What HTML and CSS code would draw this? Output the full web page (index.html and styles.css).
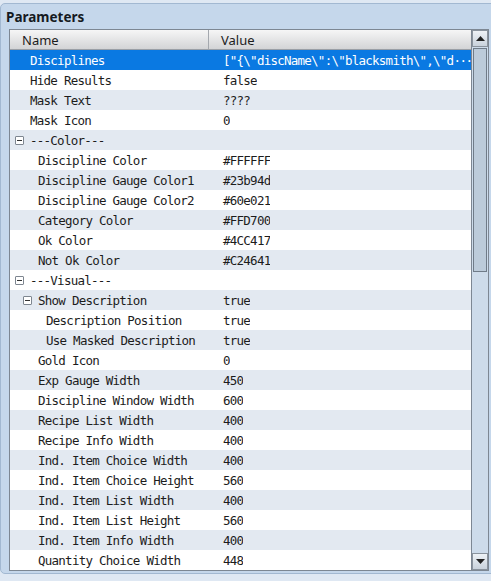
FILE: index.html
```html
<!DOCTYPE html>
<html lang="en">
<head>
  <meta charset="UTF-8">
  <title>Parameters</title>
  <link rel="stylesheet" href="styles.css">
</head>
<body>

  <div class="panel">
    <div class="panel-title">Parameters</div>

    <div class="grid">
      <div class="list">
        <div class="head">
          <div class="col-name">Name</div>
          <div class="col-value">Value</div>
        </div>

        <div class="row selected"><div class="name lv0">Disciplines</div><div class="value">["{\"discName\":\"blacksmith\",\"d<span class="more">···</span></div></div>
        <div class="row"><div class="name lv0">Hide Results</div><div class="value">false</div></div>
        <div class="row"><div class="name lv0">Mask Text</div><div class="value">????</div></div>
        <div class="row"><div class="name lv0">Mask Icon</div><div class="value">0</div></div>
        <div class="row"><div class="name lv0"><span class="toggle"></span>---Color---</div><div class="value"></div></div>
        <div class="row"><div class="name lv1">Discipline Color</div><div class="value">#FFFFFF</div></div>
        <div class="row"><div class="name lv1">Discipline Gauge Color1</div><div class="value">#23b94d</div></div>
        <div class="row"><div class="name lv1">Discipline Gauge Color2</div><div class="value">#60e021</div></div>
        <div class="row"><div class="name lv1">Category Color</div><div class="value">#FFD700</div></div>
        <div class="row"><div class="name lv1">Ok Color</div><div class="value">#4CC417</div></div>
        <div class="row"><div class="name lv1">Not Ok Color</div><div class="value">#C24641</div></div>
        <div class="row"><div class="name lv0"><span class="toggle"></span>---Visual---</div><div class="value"></div></div>
        <div class="row"><div class="name lv1"><span class="toggle"></span>Show Description</div><div class="value">true</div></div>
        <div class="row"><div class="name lv2">Description Position</div><div class="value">true</div></div>
        <div class="row"><div class="name lv2">Use Masked Description</div><div class="value">true</div></div>
        <div class="row"><div class="name lv1">Gold Icon</div><div class="value">0</div></div>
        <div class="row"><div class="name lv1">Exp Gauge Width</div><div class="value">450</div></div>
        <div class="row"><div class="name lv1">Discipline Window Width</div><div class="value">600</div></div>
        <div class="row"><div class="name lv1">Recipe List Width</div><div class="value">400</div></div>
        <div class="row"><div class="name lv1">Recipe Info Width</div><div class="value">400</div></div>
        <div class="row"><div class="name lv1">Ind. Item Choice Width</div><div class="value">400</div></div>
        <div class="row"><div class="name lv1">Ind. Item Choice Height</div><div class="value">560</div></div>
        <div class="row"><div class="name lv1">Ind. Item List Width</div><div class="value">400</div></div>
        <div class="row"><div class="name lv1">Ind. Item List Height</div><div class="value">560</div></div>
        <div class="row"><div class="name lv1">Ind. Item Info Width</div><div class="value">400</div></div>
        <div class="row"><div class="name lv1">Quantity Choice Width</div><div class="value">448</div></div>
      </div>

      <div class="scrollbar">
        <div class="scroll-btn">
          <svg width="9" height="5" viewBox="0 0 9 5"><path d="M0 5 L4.5 0 L9 5 Z" fill="#222"/></svg>
        </div>
        <div class="track">
          <div class="thumb"></div>
        </div>
        <div class="scroll-btn">
          <svg width="9" height="5" viewBox="0 0 9 5"><path d="M0 0 L9 0 L4.5 5 Z" fill="#222"/></svg>
        </div>
      </div>
    </div>
  </div>

</body>
</html>
```

FILE: styles.css
```css
body {
  margin: 0;
  background-color: #dfe8f3;
  overflow: hidden;
  font-family: "Noto Sans", sans-serif;
  color: #1c1c1c;
}
.panel {
  margin-top: 3px;
  margin-right: -6px;
  height: 571px;
  box-sizing: border-box;
  border: 1px solid #a2b8d1;
  border-radius: 5px;
  background-color: #c5d7eb;
  padding-left: 8px;
}
.panel-title {
  height: 25px;
  line-height: 26px;
  padding-left: 5px;
  margin-left: -8px;
  font-size: 13.5px;
  font-weight: bold;
  color: #151a22;
}
.grid {
  display: flex;
  width: 480px;
  height: 542px;
  box-sizing: border-box;
  border: 1px solid #7d8793;
  background-color: #fff;
}
.list {
  flex: 1;
  min-width: 0;
  overflow: hidden;
}
.head {
  display: flex;
  height: 20px;
  box-sizing: border-box;
  border-bottom: 1px solid #9a9fa6;
  background: linear-gradient(#f6f6f6, #d3d4d6);
  font-size: 13px;
  line-height: 20px;
}
.col-name {
  width: 199px;
  padding-left: 12px;
  box-sizing: border-box;
  border-right: 1px solid #a4a8ae;
}
.col-value {
  padding-left: 12px;
}
.row {
  display: flex;
  height: 20px;
  line-height: 21px;
  font-family: "DejaVu Sans Mono", monospace;
  font-size: 12.5px;
  letter-spacing: -0.75px;
  white-space: nowrap;
}
.row:nth-of-type(even) {
  background-color: #e3e9f1;
}
.row.selected {
  background-color: #0a79e2;
  color: #fff;
}
.name {
  width: 200px;
  flex-shrink: 0;
  box-sizing: border-box;
  display: flex;
  align-items: center;
}
.lv0 { padding-left: 20px; }
.lv1 { padding-left: 28px; }
.lv2 { padding-left: 36px; }
.value {
  padding-left: 13px;
  min-width: 0;
  overflow: hidden;
}
.more {
  letter-spacing: -1.5px;
}
/* collapse box in front of a group */
.toggle {
  position: relative;
  flex-shrink: 0;
  width: 9px;
  height: 9px;
  box-sizing: border-box;
  border: 1px solid #7e8690;
  border-radius: 1px;
  background-color: #fff;
  margin-left: -15px;
  margin-right: 6px;
}
.toggle::after {
  content: "";
  position: absolute;
  left: 1px;
  right: 1px;
  top: 3px;
  height: 1px;
  background-color: #333;
}
.scrollbar {
  width: 16px;
  display: flex;
  flex-direction: column;
  border-left: 1px solid #7d8793;
  background-color: #cddbea;
}
.scroll-btn {
  height: 17px;
  box-sizing: border-box;
  border: 1px solid #8a939d;
  background: linear-gradient(#eef2f6, #c9d2dc);
  display: flex;
  align-items: center;
  justify-content: center;
}
.track {
  flex: 1;
  padding: 1px 1px;
}
.thumb {
  height: 224px;
  box-sizing: border-box;
  border: 1px solid #6f7b88;
  background-color: #bccbda;
}
```
